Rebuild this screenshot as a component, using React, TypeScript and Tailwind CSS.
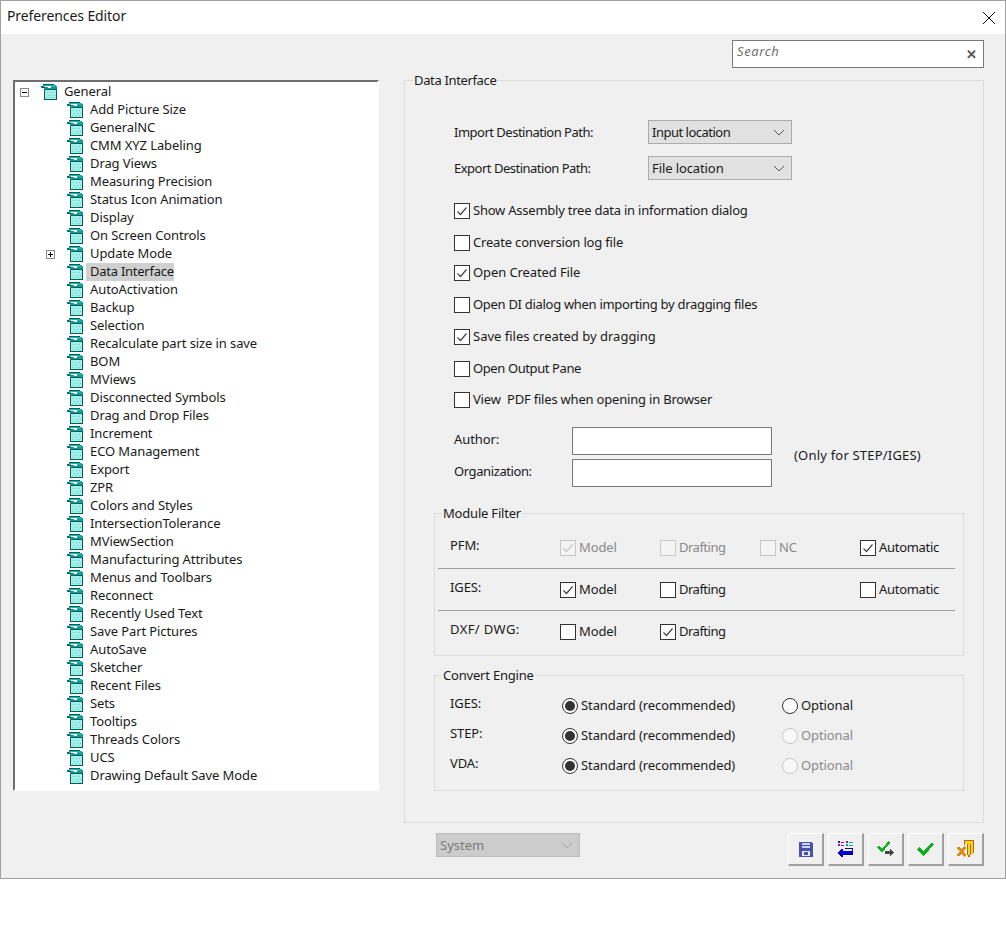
const font = "font-['Noto_Sans',sans-serif]";

const treeItems = [
  "Add Picture Size", "GeneralNC", "CMM XYZ Labeling", "Drag Views", "Measuring Precision",
  "Status Icon Animation", "Display", "On Screen Controls", "Update Mode", "Data Interface",
  "AutoActivation", "Backup", "Selection", "Recalculate part size in save", "BOM", "MViews",
  "Disconnected Symbols", "Drag and Drop Files", "Increment", "ECO Management", "Export", "ZPR",
  "Colors and Styles", "IntersectionTolerance", "MViewSection", "Manufacturing Attributes",
  "Menus and Toolbars", "Reconnect", "Recently Used Text", "Save Part Pictures", "AutoSave",
  "Sketcher", "Recent Files", "Sets", "Tooltips", "Threads Colors", "UCS", "Drawing Default Save Mode",
];

function CubeIcon() {
  return (
    <svg width="16" height="16" viewBox="0 0 16 16" shapeRendering="crispEdges" className="shrink-0">
      <path d="M4 6h12v10H4z" fill="#a4f0e8" />
      <path d="M0 2h4v1h3v1h3V3h4V2h2v4H3V4H0z" fill="#0f9c9c" />
      <path d="M2 0h11v1h2v1h-1v1h-4V2H4v1H2z" fill="#19b8b4" />
      <path d="M3 6h1v9h12v1H3zM4 5h12v1H4zM15 6h1v9h-1zM2 0h11v1H2zM0 2h2v1h2v1H1v-1H0z" fill="#055a5a" />
      <path d="M6 8h1v1H6zM9 8h1v1H9zM12 8h1v1h-1zM7 11h1v1H7zM10 11h1v1h-1zM13 11h1v1h-1zM5 13h1v1H5zM9 13h1v1H9zM12 13h1v1h-1z" fill="#5fd8d0" />
    </svg>
  );
}

function Expander({ sign }: { sign: "+" | "-" }) {
  return (
    <span className="relative block h-[9px] w-[9px] border border-[#8a8a8a] bg-white">
      <span className="absolute left-[1px] top-[3px] h-[1px] w-[5px] bg-black" />
      {sign === "+" && <span className="absolute left-[3px] top-[1px] h-[5px] w-[1px] bg-black" />}
    </span>
  );
}

function TreeRow({ label }: { label: string }) {
  const selected = label === "Data Interface";
  return (
    <div className="flex h-[18px] items-center">
      <span className="flex w-[52px] shrink-0 items-center pl-[31px]">
        {label === "Update Mode" && <Expander sign="+" />}
      </span>
      <CubeIcon />
      <span className={`ml-[3px] h-[18px] pl-[3px] pr-[1px] ${selected ? "bg-[#d0d0d0] tracking-[-0.25px]" : ""}`}>
        <span className="relative -top-[1px] left-[1px] block leading-[18px]">{label}</span>
      </span>
    </div>
  );
}

type BoxProps = { checked?: boolean; disabled?: boolean; label: string; tracking?: string };

function Check({ checked, disabled, label, tracking = "" }: BoxProps) {
  return (
    <label className={`flex items-center gap-[3px] ${disabled ? "text-[#8a8a8a]" : "text-[#1a1a1a]"}`}>
      <span className={`flex h-4 w-4 shrink-0 items-center justify-center border ${disabled ? "border-[#c8c8c8] bg-[#f4f4f4]" : "border-[#333333] bg-white"}`}>
        {checked && (
          <svg width="12" height="12" viewBox="0 0 12 12" fill="none">
            <path d="M1.5 6.5 4.5 9.5 10.5 2.5" stroke={disabled ? "#c4c4c4" : "#444444"} strokeWidth="1.2" />
          </svg>
        )}
      </span>
      <span className={`whitespace-pre ${tracking}`}>{label}</span>
    </label>
  );
}

function Radio({ checked, disabled, label }: BoxProps) {
  return (
    <label className={`flex items-center gap-[3px] ${disabled ? "text-[#8a8a8a]" : "text-[#1a1a1a]"}`}>
      <span className={`flex h-4 w-4 shrink-0 items-center justify-center rounded-full border ${disabled ? "border-[#c8c8c8] bg-[#f8f8f8]" : "border-[#333333] bg-white"}`}>
        {checked && <span className="h-[10px] w-[10px] rounded-full bg-[#333333]" />}
      </span>
      <span className="whitespace-nowrap">{label}</span>
    </label>
  );
}

function FakeSelect({ value, disabled, tracking = "" }: { value: string; disabled?: boolean; tracking?: string }) {
  return (
    <div className={`flex h-6 w-[144px] items-center justify-between border pl-[3px] pr-[4px] ${disabled ? "border-[#bcbcbc] bg-[#cccccc] text-[#7a7a7a]" : "border-[#adadad] bg-[#e1e1e1] text-[#1a1a1a]"}`}>
      <span className={`pt-[1px] ${tracking}`}>{value}</span>
      <svg width="16" height="16" viewBox="0 0 16 16" fill="none">
        <path d="M3 6l5 5 5-5" stroke={disabled ? "#a8a8a8" : "#555555"} strokeWidth="1" />
      </svg>
    </div>
  );
}

function SaveIcon() {
  return (
    <svg width="15" height="15" viewBox="0 0 15 15" shapeRendering="crispEdges" className="ml-[1px]">
      <path d="M0 0h13v1h1v14H0z" fill="#4a4fa8" />
      <path d="M3 1h8v2H3zM3 4h8v2H3z" fill="#c8d4f0" />
      <path d="M3 9h8v5H3z" fill="#e6e8f4" />
      <path d="M5 10h4v3H5z" fill="#4a4fa8" />
    </svg>
  );
}

function ListBackIcon() {
  return (
    <svg width="17" height="17" viewBox="0 0 17 17" shapeRendering="crispEdges">
      <path d="M1 0h2v2H1z" fill="#1a1ae0" />
      <path d="M1 3h2v2H1zM4 1h3v1H4zM4 4h3v1H4zM9 0h2v2H9z" fill="#a01090" />
      <path d="M9 3h2v2H9zM12 1h4v1h-4zM12 4h4v1h-4z" fill="#12a0a0" />
      <path d="M8 7h7v1H8z" fill="#0000a0" />
      <path d="M15 7h1v6h-1zM5 10h10v3H5zM4 8h2v8H4zM3 9h1v6H3zM2 10h1v4H2zM1 11h1v2H1z" fill="#0000d0" />
      <path d="M6 13h10v1H6z" fill="#000080" />
    </svg>
  );
}

function CheckArrowIcon() {
  return (
    <svg width="18" height="16" viewBox="0 0 18 16" shapeRendering="crispEdges">
      <path d="M1 5.5 5 9.5 12.5 1" fill="none" stroke="#0fb41e" strokeWidth="2.6" />
      <path d="M8 10h5V8l4 3.5-4 3.5v-2H8z" fill="#484848" />
    </svg>
  );
}

function CheckIcon() {
  return (
    <svg width="18" height="15" viewBox="0 0 18 15" shapeRendering="crispEdges">
      <path d="M1.5 6.5 6.5 11.5 16 1.5" fill="none" stroke="#0aaf1e" strokeWidth="3.2" />
    </svg>
  );
}

function ExitIcon() {
  return (
    <svg width="18" height="18" viewBox="0 0 18 18" shapeRendering="crispEdges">
      <path d="M7 1h9v13h-3v3l-3-2V5z" fill="#ffd21e" />
      <path d="M7 0h10v1H7zM16 1h1v12h-1zM7 1h1v4H7zM10 4h1v11h-1zM11 15h2v2h-2zM13 4h1v11h-1z" fill="#b86a10" />
      <path d="M1 7l7.5 9M8.5 7 1 16" stroke="#dd8a10" strokeWidth="2.8" fill="none" />
    </svg>
  );
}

function IconButton({ children }: { children: React.ReactNode }) {
  return (
    <button className="flex h-[33px] w-9 items-center justify-center border border-b-2 border-r-2 border-b-[#a0a0a0] border-l-white border-r-[#a0a0a0] border-t-white bg-[#f0f0f0]">
      {children}
    </button>
  );
}

export default function App() {
  const filterCols = "grid grid-cols-[110px_100px_100px_100px_auto] items-center pl-[15px]";
  const checks: [string, boolean, string, string][] = [
    ["Show Assembly tree data in information dialog", true, "h-[32px]", "tracking-[-0.23px]"],
    ["Create conversion log file", false, "h-[30px] pt-[1px]", "tracking-[-0.18px]"],
    ["Open Created File", true, "h-[31px]", ""],
    ["Open DI dialog when importing by dragging files", false, "h-[33px]", "tracking-[-0.3px]"],
    ["Save files created by dragging", true, "h-[31px]", "tracking-[0px]"],
    ["Open Output Pane", false, "h-[33px]", "tracking-[-0.4px]"],
    ["View  PDF files when opening in Browser", false, "h-[29px]", "tracking-[-0.2px]"],
  ];

  return (
    <div className={`h-[946px] w-[1006px] bg-white text-[13px] tracking-[-0.1px] text-[#1a1a1a] ${font}`}>
      <div className="h-[879px] border border-[#a0a0a0] bg-[#f0f0f0]">
        <div className="flex h-[33px] items-center justify-between bg-white pb-[4px] pl-[6px] pr-[9px]">
          <span className="text-[14px]">Preferences Editor</span>
          <svg width="14" height="14" viewBox="0 0 14 14" fill="none" className="mt-[4px]">
            <path d="M1 1l12 12M13 1 1 13" stroke="#111111" strokeWidth="1" />
          </svg>
        </div>

        <div className="flex justify-end pr-[21px] pt-[6px]">
          <div className="flex h-[28px] w-[252px] items-center justify-between border border-[#7a7a7a] bg-white pl-[4px] pr-[6px]">
            <span className="-mt-[5px] italic tracking-[0.6px] text-[#707070]">Search</span>
            <span className="text-[13px] font-bold leading-none text-[#555555]">✕</span>
          </div>
        </div>

        <div className="flex">
          <div className="ml-3 mt-[12px] h-[711px] w-[366px] shrink-0 border-2 border-b-white border-l-[#6e6e6e] border-r-white border-t-[#6e6e6e] bg-white pt-[1px]">
            <div className="flex h-[18px] items-center">
              <span className="flex w-[26px] shrink-0 pl-[5px]"><Expander sign="-" /></span>
              <CubeIcon />
              <span className="ml-[7px]">General</span>
            </div>
            {treeItems.map((item) => (
              <TreeRow key={item} label={item} />
            ))}
          </div>

          <div className="ml-[25px] mt-[3px] w-[580px] shrink-0">
            <fieldset className="h-[752px] border border-[#dcdcdc] pl-[49px]">
              <legend className="-ml-[41px] px-[1px] leading-[18px] tracking-[-0.35px]">Data Interface</legend>
              <div className="mt-[25px] flex h-[36px] items-center">
                <span className="w-[194px] pt-[1px] tracking-[-0.5px]">Import Destination Path:</span>
                <FakeSelect value="Input location" tracking="tracking-[-0.5px]" />
              </div>
              <div className="flex h-[36px] items-center">
                <span className="w-[194px] pt-[1px] tracking-[-0.5px]">Export Destination Path:</span>
                <FakeSelect value="File location" />
              </div>
              <div className="mt-[9px]">
                {checks.map(([label, on, h, tracking]) => (
                  <div key={label} className={`flex items-center ${h}`}>
                    <Check label={label} checked={on} tracking={tracking} />
                  </div>
                ))}
              </div>
              <div className="mt-[13px] flex items-center">
                <div className="flex flex-col gap-1">
                  <div className="flex items-center">
                    <span className="-mt-[2px] w-[118px]">Author:</span>
                    <div className="h-7 w-[200px] border border-[#7a7a7a] bg-white" />
                  </div>
                  <div className="flex items-center">
                    <span className="-mt-[2px] w-[118px] tracking-[-0.4px]">Organization:</span>
                    <div className="h-7 w-[200px] border border-[#7a7a7a] bg-white" />
                  </div>
                </div>
                <span className="-mt-[2px] ml-[22px] tracking-[0.2px]">(Only for STEP/IGES)</span>
              </div>

              <fieldset className="-ml-[20px] mt-[17px] h-[152px] w-[530px] border border-[#dcdcdc]">
                <legend className="ml-[7px] px-[1px] leading-[18px] tracking-[-0.2px]">Module Filter</legend>
                <div className={`${filterCols} mt-[5px] h-[41px]`}>
                  <span className="-mt-[4px]">PFM:</span>
                  <Check label="Model" checked disabled />
                  <Check label="Drafting" disabled tracking="tracking-[-0.5px]" />
                  <Check label="NC" disabled />
                  <Check label="Automatic" checked tracking="tracking-[-0.3px]" />
                </div>
                <div className="ml-[3px] mr-[8px] h-[1px] bg-[#a0a0a0]" />
                <div className={`${filterCols} h-[41px]`}>
                  <span className="-mt-[4px]">IGES:</span>
                  <Check label="Model" checked />
                  <Check label="Drafting" tracking="tracking-[-0.5px]" />
                  <span />
                  <Check label="Automatic" tracking="tracking-[-0.3px]" />
                </div>
                <div className="ml-[3px] mr-[8px] h-[1px] bg-[#a0a0a0]" />
                <div className={`${filterCols} h-[41px]`}>
                  <span className="-mt-[4px] tracking-[0.4px]">DXF/ DWG:</span>
                  <Check label="Model" />
                  <Check label="Drafting" checked tracking="tracking-[-0.5px]" />
                </div>
              </fieldset>

              <fieldset className="-ml-[20px] mt-[10px] h-[125px] w-[530px] border border-[#dcdcdc]">
                <legend className="ml-[7px] px-[1px] leading-[18px] tracking-[-0.2px]">Convert Engine</legend>
                <div className="mt-[7px] grid auto-rows-[30px] grid-cols-[112px_220px_auto] items-center pl-[15px]">
                  <span className="-mt-[4px]">IGES:</span>
                  <Radio label="Standard (recommended)" checked />
                  <Radio label="Optional" />
                  <span className="-mt-[4px]">STEP:</span>
                  <Radio label="Standard (recommended)" checked />
                  <Radio label="Optional" disabled />
                  <span className="-mt-[4px]">VDA:</span>
                  <Radio label="Standard (recommended)" checked />
                  <Radio label="Optional" disabled />
                </div>
              </fieldset>
            </fieldset>

            <div className="mt-[10px] flex items-start justify-between pl-[32px]">
              <FakeSelect value="System" disabled tracking="tracking-[0px]" />
              <div className="flex gap-1">
                <IconButton><SaveIcon /></IconButton>
                <IconButton><ListBackIcon /></IconButton>
                <IconButton><CheckArrowIcon /></IconButton>
                <IconButton><CheckIcon /></IconButton>
                <IconButton><ExitIcon /></IconButton>
              </div>
            </div>
          </div>
        </div>
      </div>
    </div>
  );
}
